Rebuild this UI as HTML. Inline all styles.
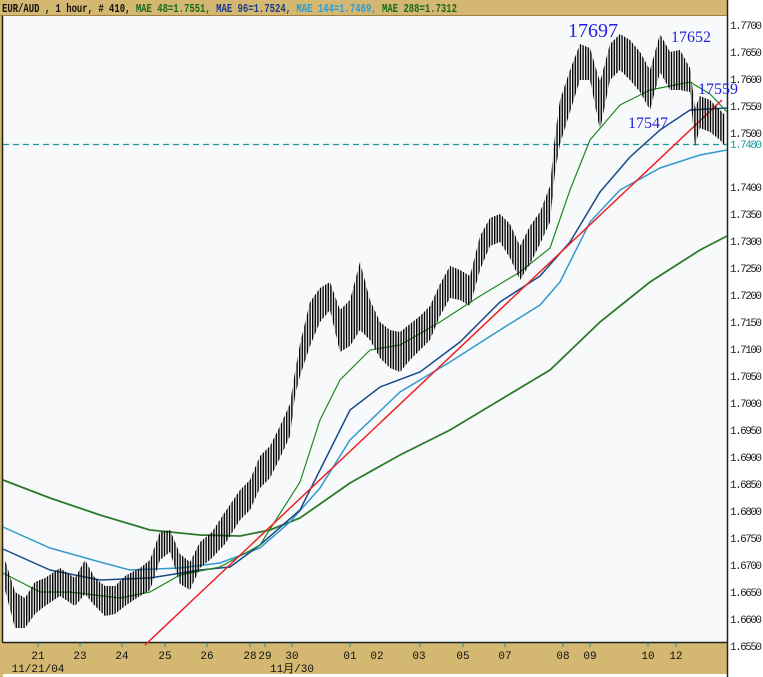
<!DOCTYPE html>
<html><head><meta charset="utf-8"><style>
body{margin:0;width:763px;height:677px;overflow:hidden;background:#fff;font-family:"Liberation Mono",monospace;}
</style></head><body>
<svg width="763" height="677" xmlns="http://www.w3.org/2000/svg" style="position:absolute;left:0;top:0">
<defs>
<pattern id="bars" x="0" y="0" width="2.6" height="10" patternUnits="userSpaceOnUse">
<rect x="0" y="0" width="1.4" height="10" fill="#000"/>
</pattern>
</defs>
<rect x="0" y="0" width="763" height="677" fill="#fff"/>
<rect x="0" y="0" width="728" height="16" fill="#d4b872"/>
<rect x="0" y="0" width="3" height="677" fill="#d4b872"/>
<rect x="0" y="643" width="728" height="31" fill="#d4b872"/>
<rect x="3" y="16" width="724" height="627" fill="#f8f9fa"/>
<line x1="727.5" y1="0" x2="727.5" y2="677" stroke="#222" stroke-width="1.5"/>
<line x1="2.5" y1="16" x2="2.5" y2="643" stroke="#222" stroke-width="1.5"/>
<line x1="3" y1="642.5" x2="727" y2="642.5" stroke="#222" stroke-width="1.5"/>
<line x1="0" y1="15.5" x2="727" y2="15.5" stroke="#a08040" stroke-width="1"/>
<g font-size="12" font-weight="bold" font-family="Liberation Mono,monospace">
<text x="2" y="12" fill="#111" textLength="455" lengthAdjust="spacingAndGlyphs">EUR/AUD , 1 hour, # 410, <tspan fill="#1a6a1a">MAE 48=1.7551, </tspan><tspan fill="#1a3a8a">MAE 96=1.7524, </tspan><tspan fill="#3399cc">MAE 144=1.7469, </tspan><tspan fill="#1a6a1a">MAE 288=1.7312</tspan></text>
</g>
<g font-size="11" fill="#222" lengthAdjust="spacingAndGlyphs">
<text x="730" y="29" textLength="32">1.7700</text><text x="730" y="56" textLength="32">1.7650</text><text x="730" y="83" textLength="32">1.7600</text><text x="730" y="110" textLength="32">1.7550</text><text x="730" y="137" textLength="32">1.7500</text>
<text x="730" y="191" textLength="32">1.7400</text><text x="730" y="218" textLength="32">1.7350</text><text x="730" y="245" textLength="32">1.7300</text><text x="730" y="272" textLength="32">1.7250</text><text x="730" y="299" textLength="32">1.7200</text><text x="730" y="326" textLength="32">1.7150</text><text x="730" y="353" textLength="32">1.7100</text><text x="730" y="380" textLength="32">1.7050</text><text x="730" y="407" textLength="32">1.7000</text><text x="730" y="434" textLength="32">1.6950</text><text x="730" y="461" textLength="32">1.6900</text><text x="730" y="488" textLength="32">1.6850</text><text x="730" y="515" textLength="32">1.6800</text><text x="730" y="542" textLength="32">1.6750</text><text x="730" y="569" textLength="32">1.6700</text><text x="730" y="596" textLength="32">1.6650</text><text x="730" y="623" textLength="32">1.6600</text><text x="730" y="650" textLength="32">1.6550</text>
<text x="730" y="148" fill="#1a9a9a" textLength="32">1.7480</text>
</g>
<line x1="3" y1="144.5" x2="727" y2="144.5" stroke="#1a9a9a" stroke-width="1.2" stroke-dasharray="6 4"/>
<polyline fill="none" stroke="#2a7a2a" stroke-width="1.8" points="3,480 50,498 100,515 150,530 200,535 240,536 270,530 300,518 350,483 400,455 450,430 500,400 550,370 600,322 650,282 700,250 727,236"/>
<polyline fill="none" stroke="#3399cc" stroke-width="1.5" points="3,527 50,548 100,562 130,570 180,568 220,563 260,548 290,522 320,488 350,440 400,392 450,362 500,330 540,305 560,282 590,222 620,190 660,168 700,155 727,150"/>
<polyline fill="none" stroke="#1a4a8a" stroke-width="1.5" points="3,549 50,570 100,580 150,578 200,570 230,567 260,545 300,510 320,470 350,410 380,387 420,372 460,342 500,302 540,276 570,242 600,192 630,157 660,130 690,110 727,108"/>
<polyline fill="none" stroke="#228822" stroke-width="1.2" points="3,573 40,592 70,592 120,598 150,592 180,575 220,567 260,545 300,482 320,420 340,380 370,350 400,345 440,322 480,296 520,272 550,248 570,190 590,140 620,105 650,90 690,82 710,94 727,112"/>
<line x1="145" y1="645" x2="722" y2="100" stroke="#ee2222" stroke-width="1.5"/>
<polygon fill="url(#bars)" points="5,560 15,592 25,598 35,582 45,578 60,568 75,578 85,560 95,578 105,586 115,586 125,576 140,568 150,560 160,532 170,530 180,554 190,562 200,542 212,532 225,512 240,490 250,480 260,456 270,446 280,426 290,404 295,372 300,344 310,302 320,288 330,282 340,310 350,300 360,262 370,300 380,322 390,330 400,332 410,324 420,316 430,306 440,284 450,266 460,270 470,276 480,236 490,218 500,214 510,224 520,246 530,226 540,212 550,186 555,136 560,100 570,70 580,44 590,48 600,82 610,44 620,34 630,40 640,52 650,70 660,34 670,52 680,50 690,68 695,108 700,96 710,100 720,110 725,115
725,146 720,140 710,132 700,128 695,146 690,92 680,90 670,90 660,72 650,110 640,92 630,80 620,70 610,80 600,130 590,80 580,80 570,112 560,144 555,172 550,222 540,244 530,264 520,280 510,258 500,242 490,246 480,270 470,306 460,300 450,298 440,316 430,340 420,350 410,360 400,372 390,368 380,358 370,340 360,330 350,346 340,352 330,310 320,322 310,346 300,376 295,396 290,436 280,458 270,478 260,488 250,510 240,520 225,544 212,558 200,568 190,590 180,584 170,552 160,560 150,590 140,596 125,606 115,614 105,616 95,606 85,594 75,606 60,596 45,606 35,614 25,628 15,628 5,590"/>
<g fill="#2222dd" font-family="Liberation Serif,serif">
<text x="568" y="37" font-size="20">17697</text>
<text x="671" y="42" font-size="16">17652</text>
<text x="698" y="94" font-size="16">17559</text>
<text x="628" y="128" font-size="16">17547</text>
</g>
<g stroke="#1a9a9a" stroke-width="1">
<line x1="38" y1="643" x2="38" y2="647"/><line x1="80" y1="643" x2="80" y2="647"/><line x1="122" y1="643" x2="122" y2="647"/><line x1="165" y1="643" x2="165" y2="647"/><line x1="207" y1="643" x2="207" y2="647"/><line x1="250" y1="643" x2="250" y2="647"/><line x1="265" y1="643" x2="265" y2="647"/><line x1="292" y1="643" x2="292" y2="647"/><line x1="350" y1="643" x2="350" y2="647"/><line x1="420" y1="643" x2="420" y2="647"/><line x1="463" y1="643" x2="463" y2="647"/><line x1="505" y1="643" x2="505" y2="647"/><line x1="563" y1="643" x2="563" y2="647"/><line x1="590" y1="643" x2="590" y2="647"/><line x1="648" y1="643" x2="648" y2="647"/><line x1="676" y1="643" x2="676" y2="647"/>
</g>
<g font-size="11" fill="#111" text-anchor="middle">
<text x="38" y="659">21</text><text x="80" y="659">23</text><text x="122" y="659">24</text><text x="165" y="659">25</text><text x="207" y="659">26</text><text x="250" y="659">28</text><text x="265" y="659">29</text><text x="292" y="659">30</text><text x="350" y="659">01</text><text x="377" y="659">02</text><text x="419" y="659">03</text><text x="463" y="659">05</text><text x="505" y="659">07</text><text x="563" y="659">08</text><text x="590" y="659">09</text><text x="648" y="659">10</text><text x="676" y="659">12</text>
<text x="38" y="672">11/21/04</text>
<text x="292" y="672" font-family="Liberation Mono,Noto Sans CJK SC,monospace">11月/30</text>
</g>
</svg>
</body></html>
